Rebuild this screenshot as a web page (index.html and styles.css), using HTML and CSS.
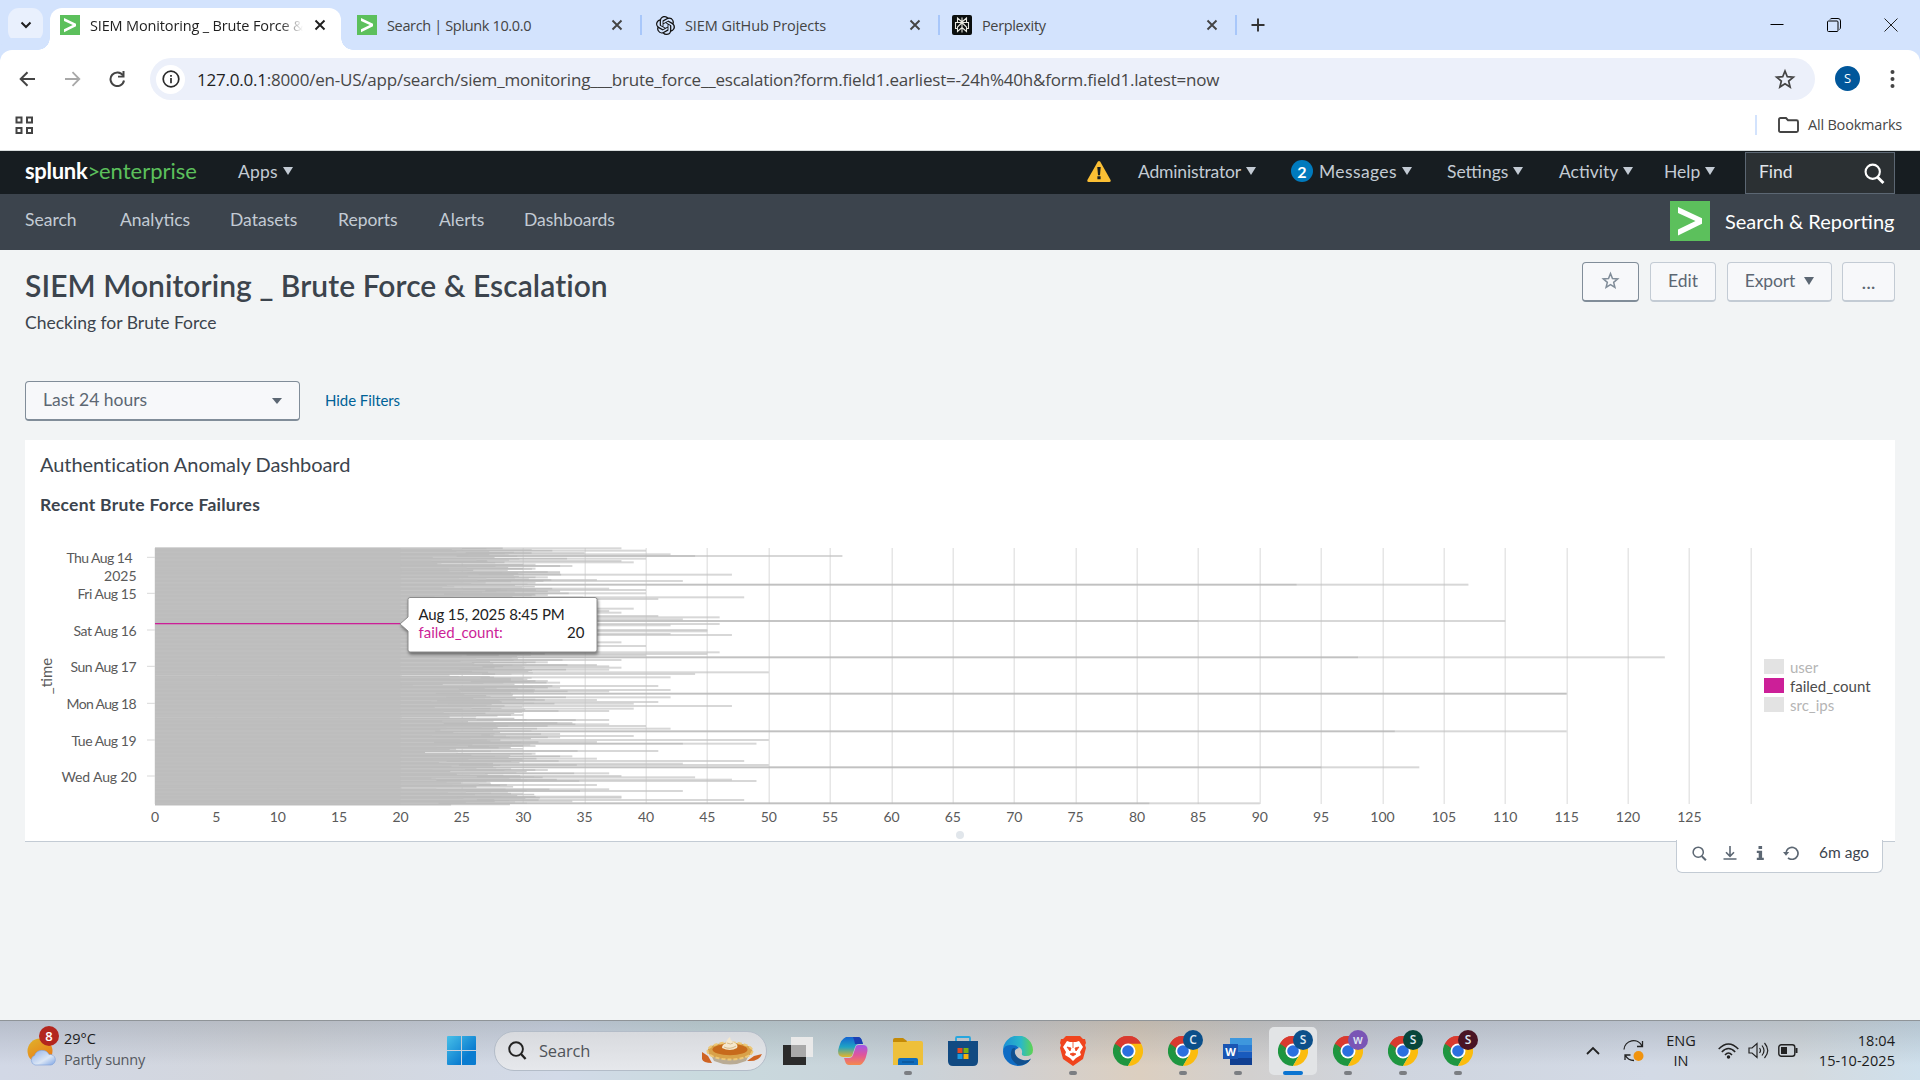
FILE: index.html
```html
<!DOCTYPE html>
<html lang="en">
<head>
<meta charset="utf-8">
<title>SIEM Monitoring _ Brute Force &amp; Escalation</title>
<link rel="stylesheet" href="styles.css">
</head>
<body>
<svg class="defs" width="0" height="0">
  <defs>
    <symbol id="close" viewBox="0 0 12 12"><path d="M1.5 1.5l9 9M10.5 1.5l-9 9" stroke="currentColor" stroke-width="1.9" fill="none"/></symbol>
    <symbol id="splunk" viewBox="0 0 40 40"><path d="M0 0h40v40H0z" fill="#5cc05c"/><path d="M8 6l24 11.3v5.4L8 34.5v-6L25.500 20 8 12z" fill="#fff"/></symbol>
    <symbol id="star" viewBox="0 0 24 24"><path d="M12 3.300l2.500 6.200 6.600.5-5.100 4.300 1.600 6.500-5.600-3.500-5.600 3.500 1.600-6.500-5.100-4.300 6.600-.5z" fill="none" stroke="currentColor" stroke-width="1.900"/></symbol>
    <symbol id="mag" viewBox="0 0 20 20"><circle cx="8.300" cy="8.300" r="6.800" fill="none" stroke="currentColor" stroke-width="2"/><path d="M13 13.500l5.500 5.500" stroke="currentColor" stroke-width="2.800"/></symbol>
    <symbol id="chrome" viewBox="0 0 30 30">
      <path d="M15 15L2 7.500A15 15 0 0 1 28 7.500z" fill="#d93a2f"/>
      <path d="M15 15L2 7.500A15 15 0 0 0 15 30l6.500-11.200z" fill="#1e9640"/>
      <path d="M15 15l6.500 3.750L15 30A15 15 0 0 0 28 7.500H15z" fill="#fbbc0e"/>
      <path d="M2 7.500l6.500 11.250L15 7.500h13A15 15 0 0 0 2 7.500z" fill="#d93a2f"/>
      <path d="M2 7.500l6.500 11.250L15 22.500 12 15z" fill="#1e9640"/>
      <circle cx="15" cy="15" r="7.500" fill="#fff"/><circle cx="15" cy="15" r="5.800" fill="#2b6fdf"/>
    </symbol>
  </defs>
</svg>

<header class="tabstrip">
  <div class="tab-menu"><svg width="12" height="8" viewBox="0 0 12 8"><path d="M1.500 1.500L6 6l4.500-4.500" fill="none" stroke="#1f1f1f" stroke-width="2"/></svg></div>
  <div class="tab active">
    <svg width="20" height="20"><use href="#splunk"/></svg>
    <span class="tab-title fade">SIEM Monitoring _ Brute Force &amp;</span>
    <svg class="x" width="12" height="12"><use href="#close"/></svg>
  </div>
  <div class="tab second">
    <svg width="20" height="20"><use href="#splunk"/></svg>
    <span class="tab-title tight">Search | Splunk 10.0.0</span>
    <svg class="x" width="12" height="12"><use href="#close"/></svg>
  </div>
  <div class="tab">
    <svg width="19" height="19" viewBox="0 0 24 24"><path d="M22.2819 9.8211a5.9847 5.9847 0 0 0-.5157-4.9108 6.0462 6.0462 0 0 0-6.5098-2.9A6.0651 6.0651 0 0 0 4.9807 4.1818a5.9847 5.9847 0 0 0-3.9977 2.9 6.0462 6.0462 0 0 0 .7427 7.0966 5.98 5.98 0 0 0 .511 4.9107 6.051 6.051 0 0 0 6.5146 2.9001A5.9847 5.9847 0 0 0 13.2599 24a6.0557 6.0557 0 0 0 5.7718-4.2058 5.9894 5.9894 0 0 0 3.9977-2.9001 6.0557 6.0557 0 0 0-.7475-7.0729zm-9.022 12.6081a4.4755 4.4755 0 0 1-2.8764-1.0408l.1419-.0804 4.7783-2.7582a.7948.7948 0 0 0 .3927-.6813v-6.7369l2.02 1.1686a.071.071 0 0 1 .038.052v5.5826a4.504 4.504 0 0 1-4.4945 4.4944zm-9.6607-4.1254a4.4708 4.4708 0 0 1-.5346-3.0137l.142.0852 4.783 2.7582a.7712.7712 0 0 0 .7806 0l5.8428-3.3685v2.3324a.0804.0804 0 0 1-.0332.0615L9.74 19.9502a4.4992 4.4992 0 0 1-6.1408-1.6464zM2.3408 7.8956a4.485 4.485 0 0 1 2.3655-1.9728V11.6a.7664.7664 0 0 0 .3879.6765l5.8144 3.3543-2.0201 1.1685a.0757.0757 0 0 1-.071 0l-4.8303-2.7865A4.504 4.504 0 0 1 2.3408 7.872zm16.5963 3.8558L13.1038 8.364 15.1192 7.2a.0757.0757 0 0 1 .071 0l4.8303 2.7913a4.4944 4.4944 0 0 1-.6765 8.1042v-5.6772a.79.79 0 0 0-.407-.667zm2.0107-3.0231l-.142-.0852-4.7735-2.7818a.7759.7759 0 0 0-.7854 0L9.409 9.2297V6.8974a.0662.0662 0 0 1 .0284-.0615l4.8303-2.7866a4.4992 4.4992 0 0 1 6.6802 4.66zM8.3065 12.863l-2.02-1.1638a.0804.0804 0 0 1-.038-.0567V6.0742a4.4992 4.4992 0 0 1 7.3757-3.4537l-.142.0805L8.704 5.459a.7948.7948 0 0 0-.3927.6813zm1.0976-2.3654l2.602-1.4998 2.6069 1.4998v2.9994l-2.5974 1.4997-2.6067-1.4997Z" fill="#111"/></svg>
    <span class="tab-title">SIEM GitHub Projects</span>
    <svg class="x" width="12" height="12"><use href="#close"/></svg>
  </div>
  <div class="tab last">
    <svg width="20" height="20" viewBox="0 0 20 20"><rect width="20" height="20" rx="2" fill="#0b0f0f"/><path d="M10 2.500v15M10 7L5.500 3v4.500M10 7l4.500-4v4.500M5.500 7.500H3.500v6h2M14.500 7.500h2v6h-2M10 7.500l-4.500 4.500v4.500L10 12.500l4.500 4V12L10 7.500M5.500 7.500h9" fill="none" stroke="#e8e8e0" stroke-width="1.100"/></svg>
    <span class="tab-title tight">Perplexity</span>
    <svg class="x" width="12" height="12"><use href="#close"/></svg>
  </div>
  <svg class="plus" width="14" height="14" viewBox="0 0 14 14"><path d="M7 .5v13M.5 7h13" stroke="#333" stroke-width="1.900"/></svg>
  <div class="window-buttons">
    <svg width="14" height="14" viewBox="0 0 14 14"><path d="M.5 6.500h13" stroke="#000"/></svg>
    <svg width="14" height="14" viewBox="0 0 14 14" fill="none" stroke="#000"><rect x=".5" y="3" width="10.500" height="10.500" rx="1"/><path d="M3 1.500Q3.300.5 5 .5h6q2.500 0 2.500 2.500v6q0 2-1 2.500"/></svg>
    <svg width="14" height="14" viewBox="0 0 14 14"><path d="M.5.5l13 13M13.500.5l-13 13" stroke="#222"/></svg>
  </div>
</header>

<div class="browser-bar">
  <div class="toolbar">
    <div class="nav-icons">
      <svg width="17" height="16" viewBox="0 0 17 16"><path d="M16 8H2M8.500 1.200L1.700 8l6.800 6.800" fill="none" stroke="#444" stroke-width="2"/></svg>
      <svg width="17" height="16" viewBox="0 0 17 16"><path d="M1 8h14M8.500 1.200L15.300 8l-6.800 6.800" fill="none" stroke="#a8a8a8" stroke-width="1.800"/></svg>
      <svg width="17" height="16" viewBox="0 0 17 16"><path d="M14 4.500A6.800 6.800 0 1 0 15 9.500" fill="none" stroke="#444" stroke-width="2"/><path d="M15.500 0v6.500H9V4.700h4.500V0z" fill="#444"/></svg>
    </div>
    <div class="omnibox">
      <span class="info"><svg width="18" height="18" viewBox="0 0 18 18"><circle cx="9" cy="9" r="7.800" fill="none" stroke="#2b2b2b" stroke-width="1.700"/><path d="M9 8v5.200M9 5v1.800" stroke="#2b2b2b" stroke-width="1.700"/></svg></span>
      <span class="url"><b>127.0.0.1</b>:8000/en-US/app/search/siem_monitoring___brute_force__escalation?form.field1.earliest=-24h%40h&amp;form.field1.latest=now</span>
      <svg class="bookmark" width="22" height="22"><use href="#star"/></svg>
    </div>
    <span class="avatar">S</span>
    <svg class="kebab" width="5" height="18" viewBox="0 0 5 18" fill="#444"><circle cx="2.500" cy="2" r="2"/><circle cx="2.500" cy="9" r="2"/><circle cx="2.500" cy="16" r="2"/></svg>
  </div>
  <div class="bookmarks">
    <svg width="19" height="19" viewBox="0 0 19 19" fill="none" stroke="#444" stroke-width="2"><path d="M1.500 1.500h5v5h-5zM12 1.500h5v5h-5zM1.500 12h5v5h-5zM12 12h5v5h-5z"/></svg>
    <div class="all-bookmarks">
      <svg width="21" height="16" viewBox="0 0 21 16"><path d="M1 13.500v-11Q1 1 2.500 1H8l2 2.200h8.500Q20 3.200 20 4.700v8.800q0 1.500-1.500 1.500h-16Q1 15 1 13.500z" fill="none" stroke="#444" stroke-width="1.900"/></svg>
      <span>All Bookmarks</span>
    </div>
  </div>
</div>

<div class="splunk-bar">
  <div class="logo"><span class="brand">splunk</span><span class="gt">&gt;</span><span class="ent">enterprise</span></div>
  <div class="menu apps"><span>Apps</span><i></i></div>
  <svg class="warn" width="24" height="21" viewBox="0 0 24 21"><path d="M10.700.8q1.300-1.500 2.600 0L23.600 19q.4 1.800-1.200 1.900H1.600Q0 20.800.4 19z" fill="#fbbf34"/><path d="M10.300 6h3.400l-.7 8.200h-2zM10.400 15.300h3.200v3h-3.200z" fill="#171d21"/></svg>
  <nav class="menus">
    <div class="menu admin"><span>Administrator</span><i></i></div>
    <div class="menu messages"><b class="count">2</b><span>Messages</span><i></i></div>
    <div class="menu"><span>Settings</span><i></i></div>
    <div class="menu"><span>Activity</span><i></i></div>
    <div class="menu"><span>Help</span><i></i></div>
  </nav>
  <div class="find"><span>Find</span><svg width="21" height="21"><use href="#mag" width="21" height="21"/></svg></div>
</div>

<div class="app-bar">
  <nav class="app-nav"><a>Search</a><a>Analytics</a><a>Datasets</a><a>Reports</a><a>Alerts</a><a>Dashboards</a></nav>
  <div class="app-name"><svg width="40" height="40"><use href="#splunk"/></svg><span>Search &amp; Reporting</span></div>
</div>

<main>
  <div class="heading">
    <div>
      <h1>SIEM Monitoring _ Brute Force &amp; Escalation</h1>
      <p>Checking for Brute Force</p>
    </div>
    <div class="actions">
      <button class="fav"><svg width="19" height="19"><use href="#star"/></svg></button>
      <button class="edit">Edit</button>
      <button class="export"><span>Export</span><i></i></button>
      <button class="more">...</button>
    </div>
  </div>
  <div class="filters">
    <div class="select"><span>Last 24 hours</span><i></i></div>
    <a>Hide Filters</a>
  </div>
  <section class="panel">
    <h2>Authentication Anomaly Dashboard</h2>
    <h3>Recent Brute Force Failures</h3>
    <div class="chart"><svg id="chart" width="1870" height="300" viewBox="25 541 1870 300"></svg></div>
    <div class="panel-tools">
      <svg width="15" height="15" viewBox="0 0 20 20"><use href="#mag"/></svg>
      <svg width="14" height="14" viewBox="0 0 14 14" fill="none" stroke="#5c6773" stroke-width="1.600"><path d="M7 0v10M3 6.300l4 4 4-4M.5 13h13"/></svg>
      <svg width="9" height="14" viewBox="0 0 9 14" fill="#5c6773"><path d="M2.500 0h3.600v3H2.500zM.8 4.700h5.300v7h1.700V14H.8v-2.300h1.900V7H.8z"/></svg>
      <svg width="16" height="14" viewBox="0 0 16 14"><path d="M3 7.500A6 6 0 1 1 5 11.800" fill="none" stroke="#5c6773" stroke-width="1.700"/><path d="M0 6h6.200L3 9.800z" fill="#5c6773"/></svg>
      <span>6m ago</span>
    </div>
  </section>
</main>

<footer class="taskbar">
  <div class="weather">
    <svg width="32" height="36" viewBox="0 0 32 36"><defs><linearGradient id="sun" x1="0" y1="0" x2=".6" y2="1"><stop offset="0" stop-color="#dfb42c"/><stop offset="1" stop-color="#ea7a16"/></linearGradient><linearGradient id="cloud" x2="1" y2="1"><stop offset="0" stop-color="#8fb0e8"/><stop offset=".6" stop-color="#dbe6f5"/><stop offset="1" stop-color="#7da4e4"/></linearGradient></defs><circle cx="13" cy="21" r="12.500" fill="url(#sun)"/><path d="M8 35a5 5 0 0 1-.5-9.500A8 8 0 0 1 22 24.500a5.300 5.300 0 0 1 2 10.500z" fill="url(#cloud)" stroke="#7d9fd8" stroke-width=".6"/></svg>
    <b>8</b>
    <div><span class="temp">29°C</span><span class="cond">Partly sunny</span></div>
  </div>
  <div class="dock">
    <svg class="win" width="29" height="29" viewBox="0 0 29 29"><defs><linearGradient id="w" x2="1" y2="1"><stop offset="0" stop-color="#48c0e8"/><stop offset=".7" stop-color="#0a7cd0"/></linearGradient></defs><path d="M0 1q0-1 1-1h13v14H0zM15 0h13q1 0 1 1v13H15zM0 15h14v14H1q-1 0-1-1zM15 15h14v13q0 1-1 1H15z" fill="url(#w)"/></svg>
    <div class="search">
      <svg width="19" height="19" viewBox="0 0 20 20"><circle cx="8.500" cy="8.500" r="7.200" fill="none" stroke="#222" stroke-width="2"/><path d="M13.500 13.500l5 5.500" stroke="#222" stroke-width="2.400"/></svg>
      <span>Search</span>
      <svg class="pie" width="60" height="28" viewBox="0 0 60 28"><path d="M0 15l6 4 4 7Q1 26 0 22zM60 17l-8 2-7 5q12 1 15-7z" fill="#cf6322"/><path d="M7 14h42l-5 10Q28 31 12 24z" fill="#b9ab94"/><ellipse cx="28" cy="14" rx="22.500" ry="8.500" fill="#d9a24a" stroke="#edc878" stroke-width="2" stroke-dasharray="4 2"/><ellipse cx="28" cy="12.500" rx="17.500" ry="5.800" fill="#c76a1c"/><path d="M20 11q0-4 4-4.500Q24 3 28 0q0 3 3 5 6 2 4 6-7 4-15 0z" fill="#f4e7cd"/><path d="M22 10q6 3 12-1M25 6q4 2 6 0" stroke="#d6b98a" fill="none"/></svg>
    </div>
    <div class="apps-row">
      <div><svg width="30" height="30" viewBox="0 0 30 30"><path d="M0 9h23v20H0z" fill="#2b2b2b"/><path d="M8 1h22v20H8z" fill="#e9e9e9"/><path d="M8 9h15v12H8z" fill="#a9a9a9"/></svg></div>
      <div><svg width="30" height="30" viewBox="0 0 30 30"><defs><linearGradient id="c1" y2="1" x2="0"><stop offset="0" stop-color="#1464d2"/><stop offset=".5" stop-color="#1fa3c4"/><stop offset="1" stop-color="#e4b52a"/></linearGradient><linearGradient id="c2" y2="1" x2="0"><stop offset="0" stop-color="#a157e8"/><stop offset=".5" stop-color="#e0559b"/><stop offset="1" stop-color="#f58a4c"/></linearGradient></defs><path d="M8 1h12q3 0 4 4l1 3h-4q-3 0-4 3l-3 9q-1 1-3 1H5q-7-1-4-10 2-8 7-10z" fill="url(#c1)"/><path d="M15 1h5q3 0 4 4l1 3h-8q-1-5-2-7z" fill="#1c3fb3"/><path d="M22 29H11q-3 0-4-4l-1-3h5q3 0 4-3l3-9q1-1 3-1h4q6 0 4 8-2 10-7 12z" fill="url(#c2)"/></svg></div>
      <div class="run"><svg width="30" height="30" viewBox="0 0 30 30"><path d="M0 4q0-2 2-2h8l4 3v5H0z" fill="#c48a06"/><path d="M0 6h13l2-1h13q2 0 2 2v22H0z" fill="#eec03a"/><path d="M5 29v-5q0-2 2-2h16q2 0 2 2v5z" fill="#0f6cbd"/><path d="M9 26h12" stroke="#084a86"/></svg></div>
      <div><svg width="30" height="30" viewBox="0 0 30 30"><path d="M8 6V2q0-1 1-1h12q1 0 1 1v4" fill="none" stroke="#27a6de" stroke-width="1.800"/><path d="M0 5h30v20q0 5-5 5H5q-5 0-5-5z" fill="#114a82"/><path d="M9.500 12h5v5h-5z" fill="#e64a22"/><path d="M15.500 12h5v5h-5z" fill="#7bb013"/><path d="M9.500 18h5v5h-5z" fill="#1a9be0"/><path d="M15.500 18h5v5h-5z" fill="#f5b010"/></svg></div>
      <div><svg width="30" height="30" viewBox="0 0 30 30"><defs><linearGradient id="e1" x2="1"><stop offset="0" stop-color="#1c8fd6"/><stop offset=".6" stop-color="#2bb8c8"/><stop offset="1" stop-color="#5fd44f"/></linearGradient></defs><path d="M0 15A15 15 0 0 1 30 14q0 6-7 6-5 0-4-3 1-6-7-7Q3 9 0 15z" fill="url(#e1)"/><path d="M0 15Q1 8 9 9q5 0 7 3-6 1-4 8 3 7 11 5 4-1 5-3-4 8-13 8A15 15 0 0 1 0 15z" fill="#0f6cc4"/><path d="M9 13q-4 10 6 16 8 1 13-6-4 2-8 1-10-3-8-12-2 0-3 1z" fill="#10508f"/></svg></div>
      <div class="run"><svg width="30" height="30" viewBox="0 0 30 30"><path d="M8 0h14l3 3 2 0 1 4-1 2 1 3-3 11-10 7-10-7-3-11 1-3-1-2 1-4 2 0z" fill="#f0441d"/><path d="M9 5l3 1h6l3-1 4 6-3 5 1 3-5 3-3 3-3-3-5-3 1-3-3-5z" fill="#fff"/><path d="M9 11l4 1-1 3zM21 11l-4 1 1 3zM12 18l3-1 3 1-3 2zM15 6v6" fill="#f0441d" stroke="#f0441d" stroke-width=".8"/></svg></div>
      <div><svg width="30" height="30"><use href="#chrome"/></svg></div>
      <div class="run"><svg width="30" height="30"><use href="#chrome"/></svg><b class="c">C</b></div>
      <div class="run"><svg width="30" height="30" viewBox="0 0 30 30"><path d="M7 2h22v7H7z" fill="#3e97dd"/><path d="M7 9h22v6.500H7z" fill="#2b7cd3"/><path d="M7 15.500h22v6.500H7z" fill="#185abd"/><path d="M7 22h22v7H7z" fill="#103f91"/><path d="M0 8h15v15H0z" fill="#1955b3"/><text x="7.500" y="19.500" text-anchor="middle" fill="#fff" font-family="Open Sans,sans-serif" font-weight="700" font-size="11">W</text></svg></div>
      <div class="run current"><svg width="30" height="30"><use href="#chrome"/></svg><b class="c">S</b></div>
      <div class="run"><svg width="30" height="30"><use href="#chrome"/></svg><b class="w">w</b></div>
      <div class="run"><svg width="30" height="30"><use href="#chrome"/></svg><b class="g">S</b></div>
      <div class="run"><svg width="30" height="30"><use href="#chrome"/></svg><b class="m">S</b></div>
    </div>
  </div>
  <div class="tray">
    <svg width="14" height="9" viewBox="0 0 14 9"><path d="M1 8l6-6 6 6" fill="none" stroke="#222" stroke-width="1.800"/></svg>
    <svg width="21" height="22" viewBox="0 0 21 22"><path d="M1 9.500A9.500 9.500 0 0 1 19 6M19.500 1v5.500H14M2 20v-5h5.500M2.500 15.500Q5 20.500 11 20.500" fill="none" stroke="#222" stroke-width="1.300"/><circle cx="15.500" cy="16" r="5" fill="#f0930e"/></svg>
    <div class="lang">ENG<br>IN</div>
    <svg width="21" height="16" viewBox="0 0 21 16" fill="none" stroke="#222" stroke-width="1.500"><path d="M.7 6Q10.500-4 20.300 6M3.800 9q6.700-7 13.400 0M7 12q3.500-4 7 0"/><circle cx="10.500" cy="14" r="1" fill="#222"/></svg>
    <svg width="21" height="17" viewBox="0 0 21 17" fill="none" stroke="#222" stroke-width="1.200"><path d="M1 6h3l5-4.500v14L4 11H1zM11.500 6q2 2.500 0 5M14 3.500q4 5 0 10M16.500 1q6.500 7.500 0 15"/></svg>
    <svg width="20" height="13" viewBox="0 0 20 13"><rect x=".8" y=".8" width="16" height="11.400" rx="2.500" fill="none" stroke="#222" stroke-width="1.400"/><path d="M3 3h6v7H3zM17.500 4h2v5h-2z" fill="#222"/></svg>
    <div class="clock">18:04<br>15-10-2025</div>
  </div>
</footer>
<script src="chart.js"></script>
</body>
</html>
```
FILE: styles.css
```css
* { box-sizing: border-box; }
body { margin: 0; width: 1920px; height: 1080px; overflow: hidden; display: flex; flex-direction: column; background: #f2f4f5; font-family: Lato, "Liberation Sans", sans-serif; font-size: 17.5px; color: #3c444d; }
svg { display: block; flex: none; }
span, a, h1, h2, h3, p { white-space: nowrap; }
.defs { position: absolute; }

/* browser chrome */
.tabstrip { height: 50px; background: #d3e3fd; display: flex; align-items: center; padding: 0 22px 0 8px; font: 14.5px "Open Sans", sans-serif; color: #444; flex: none; }
.tab-menu { width: 35px; height: 34px; border-radius: 11px; background: #e9f0fd; display: grid; place-items: center; margin-right: 7px; }
.tab { width: 298px; height: 20px; padding: 0 17px 0 14px; display: flex; align-items: center; border-right: 2px solid #a8c7fa; letter-spacing: -.08px; }
.tab.active { width: 291px; height: 42px; align-self: flex-end; background: #fff; border-radius: 12px 12px 0 0; border: 0; padding: 0 15px 8px 10px; color: #1f1f1f; position: relative; letter-spacing: -.15px; }
.tab.active::before, .tab.active::after { content: ""; position: absolute; bottom: 0; width: 12px; height: 12px; }
.tab.active::before { left: -12px; background: radial-gradient(circle at 0 0, transparent 11.500px, #fff 12px); }
.tab.active::after { right: -12px; background: radial-gradient(circle at 100% 0, transparent 11.500px, #fff 12px); }
.tab.second { width: 301px; padding-left: 16px; }
.tab.last { width: 297px; padding-left: 12px; }
.tab-title { margin-left: 10px; flex: 1; }
.tight { letter-spacing: -.35px; }
.fade { flex: 0 0 214px; min-width: 0; -webkit-mask: linear-gradient(90deg, #000 190px, transparent 213px); mask: linear-gradient(90deg, #000 190px, transparent 213px); margin-right: 10px; }
.plus { margin-left: 14px; }
.window-buttons { display: flex; gap: 43px; margin-left: auto; }
.browser-bar { height: 101px; background: #fff; border-bottom: 1px solid #d8dcdc; box-shadow: 0 -12px 0 #d3e3fd; flex: none; border-radius: 12px 12px 0 0; font-family: "Open Sans", sans-serif; }
.toolbar { height: 58px; display: flex; align-items: center; padding: 0 25px 0 19px; }
.nav-icons { display: flex; gap: 28px; width: 131px; padding-bottom: 1px; }
.omnibox { width: 1665px; height: 42px; border-radius: 21px; background: #ecf0fa; display: flex; align-items: center; padding: 0 19px 0 7px; }
.info { width: 29px; height: 29px; border-radius: 50%; background: #fff; display: grid; place-items: center; margin-left: -1px; }
.url { margin-left: 12px; font-size: 17px; color: #474747; letter-spacing: -.21px; }
.url b { font-weight: 400; color: #1f1f1f; }
.bookmark { color: #444; margin-left: auto; }
.avatar { width: 25px; height: 25px; border-radius: 50%; background: #01579b; color: #fff; display: grid; place-items: center; font-size: 13px; margin: -2px 0 0 20px; }
.kebab { margin: -1px 0 0 30px; }
.bookmarks { height: 34px; display: flex; align-items: center; justify-content: space-between; padding: 0 18px 0 15px; font-size: 14.500px; color: #474747; letter-spacing: -.2px; }
.all-bookmarks { border-left: 2px solid #d3e3fd; height: 20px; display: flex; align-items: center; gap: 9px; padding-left: 21px; width: 147px; }
.all-bookmarks span { padding-bottom: 2px; }

/* product bars */
.splunk-bar { height: 43px; background: #171d21; color: #c3cbd4; display: flex; align-items: center; padding: 0 25px; flex: none; }
.logo { width: 213px; display: flex; font-size: 22px; color: #5cc05c; line-height: 28px; padding-bottom: 3px; }
.brand { color: #fff; font-weight: 700; letter-spacing: -.3px; }
.gt { letter-spacing: -1.200px; }
.menu { display: flex; align-items: center; }
i { border: 5px solid transparent; border-top: 8px solid currentColor; border-bottom: 0; margin-left: 5px; }
.splunk-bar .menu { padding-bottom: 3px; }
.apps { width: 850px; letter-spacing: .2px; }
.warn { margin: 0 27px 2px -1px; }
.menus { display: grid; grid-template-columns: 153px 156px 112px 105px 81px; }
.admin { letter-spacing: -.17px; }
.messages { letter-spacing: .39px; }
.count { width: 22px; height: 22px; border-radius: 50%; background: #007abd; color: #fff; display: grid; place-items: center; font-size: 16px; margin-right: 6px; letter-spacing: 0; }
.find { width: 150px; height: 42px; border: 1px solid #5c6773; background: #2b3033; display: flex; justify-content: space-between; align-items: center; padding: 0 10px 3px 13px; color: #e1e6eb; }
.find svg { color: #fff; margin: 4px -1px 0 0; }
.app-bar { height: 56px; background: #3c444d; display: flex; justify-content: space-between; padding: 0 25px; color: #c3cbd4; flex: none; }
.app-nav { display: grid; grid-template-columns: 95px 110px 108px 101px 85px 92px; align-items: center; padding-bottom: 5px; }
.app-name { display: flex; align-items: center; gap: 15px; width: 225px; color: #fff; font-size: 20px; padding-bottom: 2px; }
.app-name svg { margin-top: 0; }

/* dashboard */
main { flex: 1; padding: 12px 25px 0; }
.heading { display: flex; justify-content: space-between; height: 119px; }
h1 { margin: 3px 0 0; font-size: 30px; line-height: 40px; font-weight: 600; letter-spacing: .06px; }
p { margin: 6px 0 0; line-height: 24px; }
.actions { display: flex; height: 40px; gap: 11px; }
button { font: inherit; color: #5c6773; background: #f7f8fa; border: 1px solid #c3cbd4; border-bottom-width: 2px; border-radius: 4px; padding: 0 0 2px; display: flex; align-items: center; justify-content: center; }
.fav { width: 57px; border-color: #818d99; color: #818d99; }
.edit { width: 66px; }
.export { width: 105px; letter-spacing: -.15px; }
.export i { margin-left: 9px; }
.more { width: 53px; margin-left: -1px; font-size: 20px; }
.filters { display: flex; height: 59px; gap: 25px; }
.select { width: 275px; height: 40px; border: 1px solid #818d99; border-bottom-width: 2px; border-radius: 4px; background: #f7f8fa; display: flex; align-items: center; justify-content: space-between; padding: 0 17px 3px; color: #5c6773; }
.select i { border-width: 6px 5px 0; margin-top: 3px; }
.filters a { color: #006297; font-size: 15px; line-height: 38px; letter-spacing: -.07px; }
.panel { height: 402px; background: #fff; border-bottom: 1px solid #c3cbd4; display: flex; flex-direction: column; }
h2 { margin: 10px 0 0 15px; font-size: 20px; font-weight: 400; line-height: 28px; letter-spacing: -.05px; }
h3 { margin: 15px 0 0 15px; font-size: 17.500px; font-weight: 700; line-height: 24px; letter-spacing: .27px; }
.chart { margin-top: 24px; height: 300px; flex: none; }
.panel-tools { align-self: flex-end; margin: -1px 12px 0 0; width: 207px; height: 33px; flex: none; background: #fff; border: 1px solid #c3cbd4; border-top: 0; border-radius: 0 0 6px 6px; display: grid; grid-template-columns: 31px 33px 27px 36px auto; align-items: center; padding: 0 0 6px 15px; font-size: 15.500px; color: #5c6773; position: relative; }
.panel-tools span { color: #3c444d; padding-bottom: 3px; }
#chart text { font-size: 14px; fill: #5a5a5a; }
#chart .axis, #chart .leg, #chart .tip { font-size: 15px; }
#chart .tip { letter-spacing: -.19px; }

/* taskbar */
.taskbar { height: 60px; flex: none; border-top: 1px solid #8f9498; background: linear-gradient(180deg, rgba(60,70,80,.18), rgba(255,255,255,0) 75%), linear-gradient(90deg, #d2d8e6 0, #d3d6dc 280px, #d2dae8 560px, #c9dade 700px, #c9d3da 900px, #d0d0d2 1000px, #dccfc0 1140px, #d2d0cf 1250px, #cfd5df 1400px, #d3dae6 1650px, #d4dadf 1800px, #cfe0ec 1920px); font: 14.500px "Open Sans", sans-serif; color: #1c1c1c; display: flex; align-items: center; }
.weather { width: 447px; padding-left: 27px; display: flex; gap: 5px; position: relative; line-height: 21px; padding-bottom: 3px; }
.weather svg { margin-top: 2px; }
.weather b { position: absolute; left: 39px; top: -2px; width: 20px; height: 20px; border-radius: 50%; background: #b3261e; color: #fff; font-size: 13px; line-height: 20px; text-align: center; font-weight: 600; }
.weather span { display: block; }
.cond { color: #55595f; letter-spacing: -.2px; }
.dock { display: flex; align-items: center; width: 1139px; }
.search { margin: 0 7px 0 18px; width: 273px; height: 40px; border-radius: 20px; background: linear-gradient(#d8dade, #e6e8ec); border: 1px solid #b3bcc8; display: flex; align-items: center; padding: 0 4px 0 13px; font-size: 16.500px; color: #50545a; letter-spacing: -.2px; }
.search span { margin-left: 12px; }
.pie { margin-left: auto; }
.apps-row { display: flex; gap: 7px; }
.apps-row div { width: 48px; height: 48px; border-radius: 5px; display: grid; place-items: center; position: relative; }
.apps-row .run::after { content: ""; position: absolute; left: 20px; bottom: 0; width: 8px; height: 4px; border-radius: 2px; background: #7b7e82; }
.apps-row .current { background: #e2e4e6; }
.apps-row .current::after { left: 14px; width: 20px; background: #0b74d1; }
.apps-row b { position: absolute; left: 24px; top: 3px; width: 20px; height: 20px; border-radius: 50%; color: #dfe8f2; font-size: 12px; line-height: 20px; text-align: center; font-weight: 600; background: #0b4f8a; }
.apps-row b.w { background: #7a55b5; }
.apps-row b.g { background: #07463c; }
.apps-row b.m { background: #4a1424; }
.tray { display: grid; grid-template-columns: 37px 38px 57px 30px 30px 20px 1fr; align-items: center; flex: 1; padding-right: 25px; line-height: 20px; }
.lang { text-align: center; width: 40px; }
.clock { text-align: right; letter-spacing: .05px; }
```
FILE: chart.js
```js
const NS = 'http://www.w3.org/2000/svg';
const chart = document.getElementById('chart');
const X0 = 155, UNIT = 12.275, TOP = 548, BOTTOM = 804;

function add(name, attrs, text) {
  const el = document.createElementNS(NS, name);
  for (const k in attrs) el.setAttribute(k, attrs[k]);
  if (text !== undefined) el.textContent = text;
  chart.appendChild(el);
  return el;
}

for (let v = 0; v <= 130; v += 5) {
  const x = X0 + v * UNIT;
  add('rect', { x: Math.round(x) - .5, y: TOP, width: 1.5, height: BOTTOM - TOP, fill: '#e6e6e6' });
  if (v < 130) add('text', { x: x, y: 822, 'text-anchor': 'middle' }, v);
}

// label, tick position, label width
const days = [['Thu Aug 14', 557.3, 66], ['Fri Aug 15', 593.3, 59], ['Sat Aug 16', 630, 63], ['Sun Aug 17', 666.3, 66], ['Mon Aug 18', 703.3, 70], ['Tue Aug 19', 740, 65], ['Wed Aug 20', 776, 75]];
days.forEach(([label, y, w], i) => {
  add('rect', { x: 147, y: y - .5, width: 8, height: 1, fill: '#d9d9d9' });
  add('text', { x: (i ? 136.5 : 132.5) - w, y: y + 5.8, textLength: w }, label);
});
add('text', { x: 136.5, y: 581, 'text-anchor': 'end' }, '2025');
add('text', { x: 0, y: 0, 'text-anchor': 'middle', transform: 'translate(52 676) rotate(-90)', class: 'axis' }, '_time');

// [row offset in thirds of a pixel, count, count of the overlapping bar]
const bars = [[55,38],[62,40],[69,35],[73,42],[78,56,44],[86,40],[93,38],[97,39],[104,31],[108,34],[116,31],[126,33],[130,33],[134,47],[142,32],[150,36],[153,43],[164,107,93],[176,37],[180,40],[184,33],[190,40],[195,32],[202,48],[207,41],[214,36],[222,34],[229,33],[236,39],[243,37],[248,38],[258,41],[262,46],[268,43],[273,110,85],[282,46],[286,42],[300,45],[304,45],[312,42],[315,47],[323,34],[330,31],[337,38],[348,40],[356,33],[367,46],[372,45],[376,40],[382,123,98],[390,38],[397,32],[405,36],[409,37],[413,38],[419,37],[427,50],[432,44],[442,42],[447,30],[453,32],[458,33],[468,41],[473,33],[480,42],[484,37],[491,115,115],[502,42],[510,36],[516,41],[521,39],[528,47],[536,39],[543,37],[555,30],[570,37],[579,34],[583,37],[588,40],[596,42],[604,115,101],[612,33],[618,39],[622,33],[630,50],[636,36],[641,49,43],[648,31],[653,29],[663,41],[671,31],[679,34],[686,36],[693,48],[701,43],[705,50],[712,103,95],[720,32],[730,37],[738,38],[742,44],[749,47],[753,49],[765,36],[778,37],[783,43],[791,30],[800,38],[803,38],[810,48],[814,34],[820,90,81]];
const gaps = [[101,23],[122,24],[434,24],[464,21],[551,24],[560,24],[575,25.5],[657,24],[667,22],[772,20]];
const noise = n => Math.abs(Math.sin(n * 12.9898) * 43758.5453) % 1;
const inGap = z => gaps.some(g => Math.abs(g[0] - z) < 2.5);
const row = (y, v, height, fill, opacity = 1) => add('rect', { x: X0, y: y, width: v * UNIT, height: height, fill: fill, 'fill-opacity': opacity });

// each pass overlays the previous one, from the longest and palest rows to the densest
for (let n = 0, z = 54; z < 822; z += 3.8, n++) if (!inGap(z)) row(530 + z / 3, 27 + noise(n) * 4, 1.4, '#cdcdcd');
for (const [z, v] of bars) row(529 + z / 3, v, 2, '#c2c2c2', .65);
bars.forEach(([z, v, d], n) => row(529.2 + z / 3, d || Math.min(v - 1, 27 + noise(n + 7) * 8), 1.6, '#b8b8b8', .7));
for (let n = 0, z = 54; z < 822; z += 3.8, n++) if (!inGap(z)) row(530 + z / 3, 22.5 + noise(n + 3) * 4.5, 1.5, n % 3 ? '#bdbdbd' : '#c4c4c4');
gaps.forEach(([z, v]) => row(529.5 + z / 3, v, 1.4, '#bdbdbd'));
row(TOP, 20, BOTTOM - TOP + .7, '#bdbdbd', .75);
row(623, 20, 1.3, '#cc1f98');

[['user', 659, '#e3e3e3', '#b5b5b5'], ['failed_count', 678, '#cc1f98', '#4c4c4c'], ['src_ips', 697, '#e3e3e3', '#b5b5b5']].forEach(([name, y, swatch, ink]) => {
  add('rect', { x: 1764, y: y, width: 20, height: 15, fill: swatch });
  add('text', { x: 1790, y: y + 14.4, style: 'fill:' + ink, class: 'leg' }, name);
});

const tip = add('path', { d: 'M410 597.500h185q2 0 2 2v50.500q0 2-2 2h-185q-2 0-2-2v-19l-8-7 8-7v-17.500q0-2 2-2z', fill: '#fff', stroke: '#8c8c8c' });
tip.style.filter = 'drop-shadow(1px 2px 1.500px rgba(0,0,0,.45))';
add('text', { x: 418.5, y: 620.4, style: 'fill:#222', class: 'tip' }, 'Aug 15, 2025 8:45 PM');
add('text', { x: 418.5, y: 638.4, style: 'fill:#cc1f98', class: 'leg' }, 'failed_count:');
add('text', { x: 584.5, y: 638.4, 'text-anchor': 'end', style: 'fill:#222', class: 'leg' }, '20');
add('circle', { cx: 960, cy: 835, r: 4, fill: '#e1e6eb' });
```
